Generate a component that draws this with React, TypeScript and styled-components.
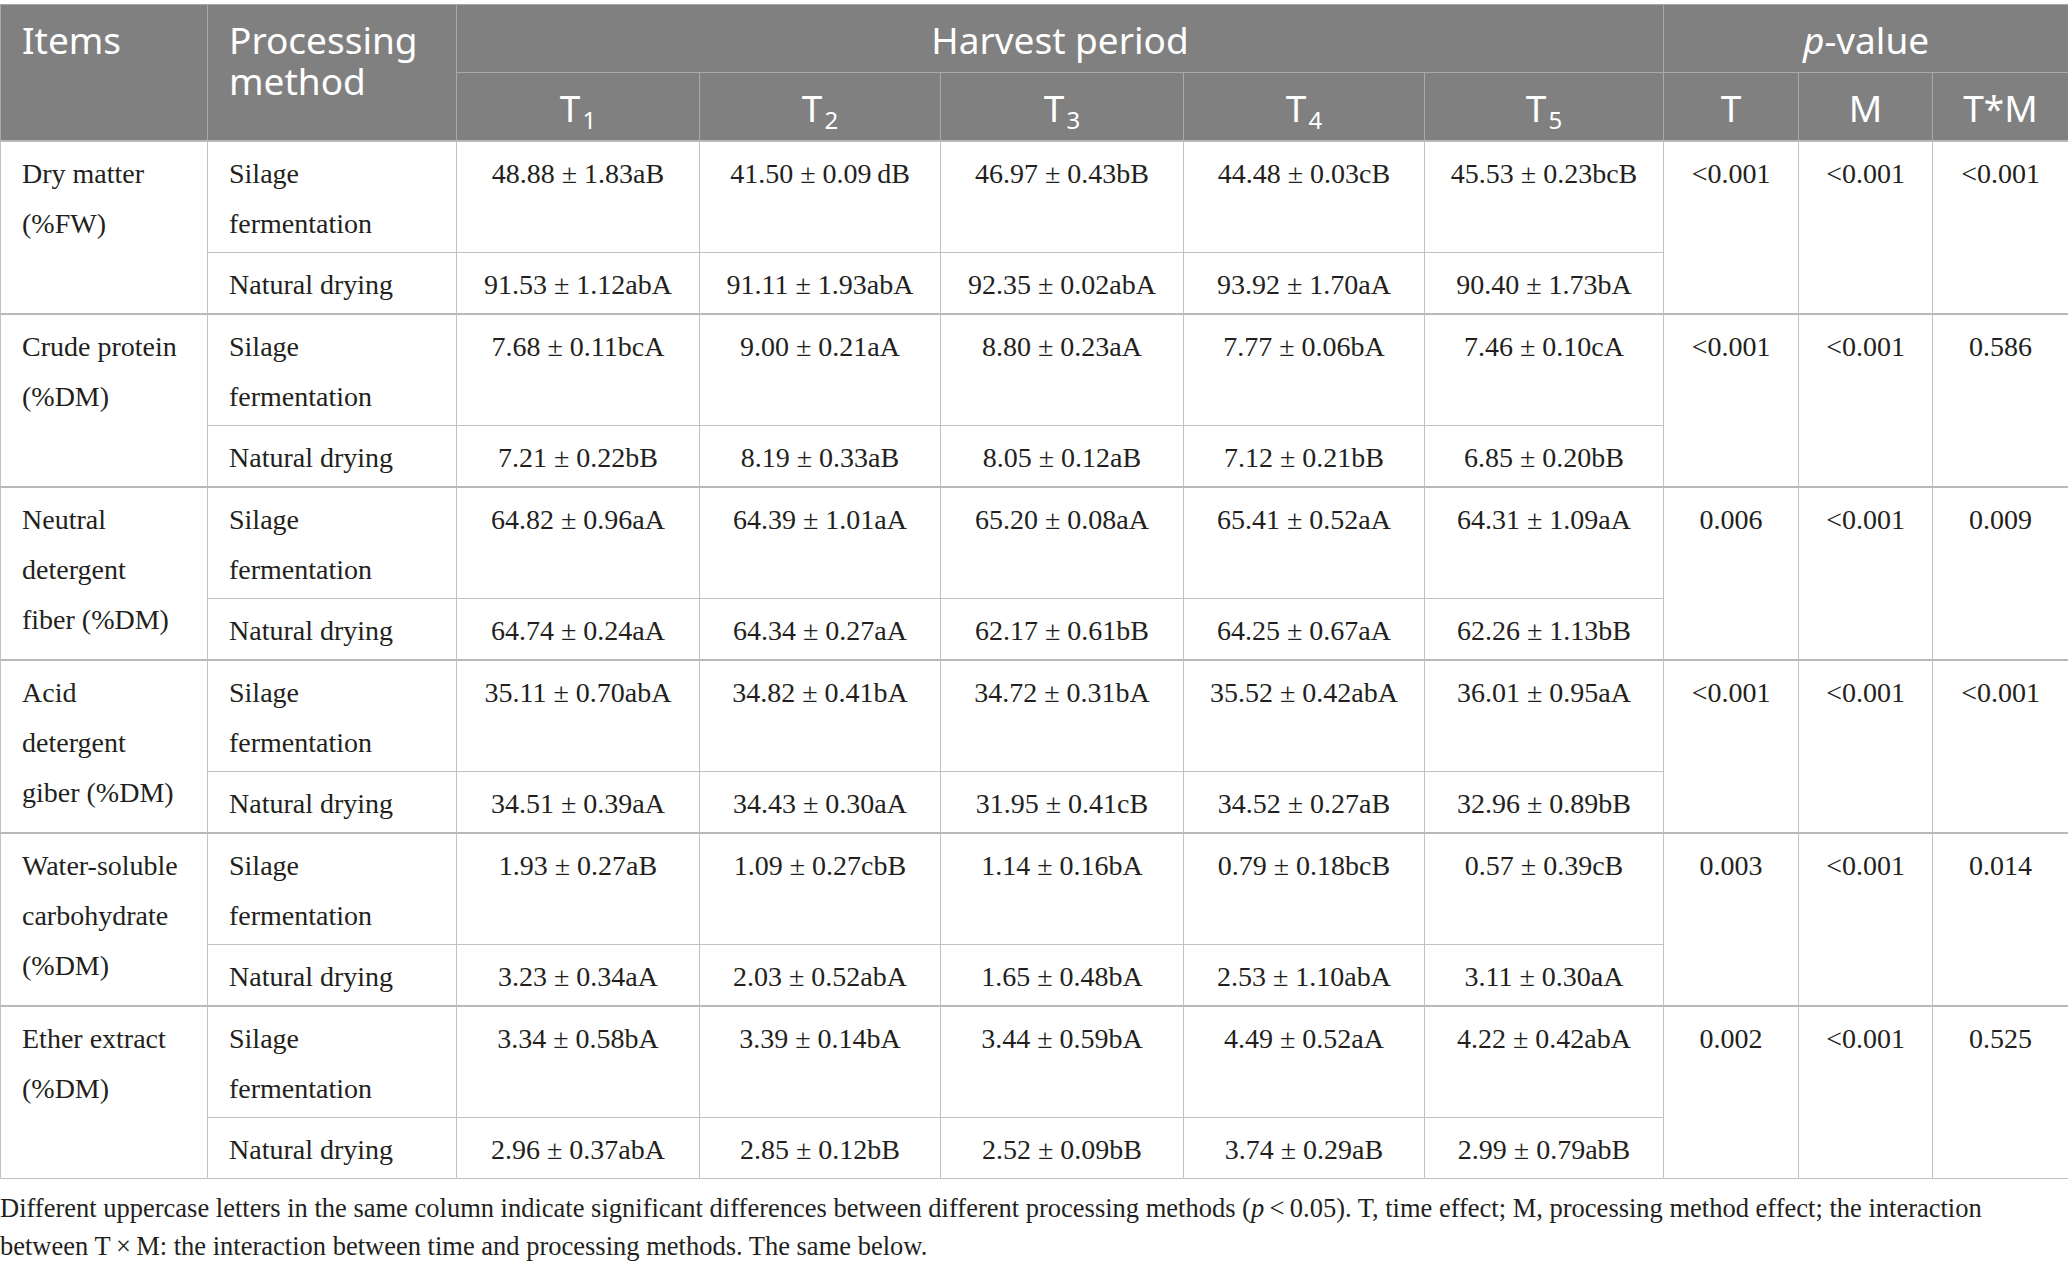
import React from "react";
import styled, { createGlobalStyle } from "styled-components";

const Global = createGlobalStyle`
  html, body { margin: 0; padding: 0; background: #ffffff; }
  body { font-family: "Liberation Serif", "Times New Roman", serif; }
`;

const Page = styled.div`
  padding-top: 4px;
  width: 2068px;
`;

const Table = styled.table`
  width: 2068px;
  table-layout: fixed;
  border-collapse: collapse;
  border: 1px solid #c2c2c2;
`;

const HeadCell = styled.th<{ $align?: "left" | "center" }>`
  background: #808080;
  color: #ffffff;
  font-family: "Noto Sans", "Open Sans", sans-serif;
  font-weight: 400;
  font-size: 37px;
  line-height: 41px;
  padding: 14px 21px 12px;
  text-align: ${(p) => p.$align ?? "center"};
  vertical-align: top;
  border: 1px solid #a9a9a9;
  white-space: nowrap;
`;

const Sub = styled.sub`
  font-size: 24px;
  line-height: 0;
  vertical-align: -7px;
  margin-left: 2px;
`;

const Cell = styled.td<{ $align?: "left" | "center"; $group?: boolean }>`
  font-family: "Liberation Serif", "Times New Roman", serif;
  font-size: 28px;
  line-height: 50px;
  color: #231f20;
  padding: 7px 21px 3px;
  text-align: ${(p) => p.$align ?? "center"};
  vertical-align: top;
  border-left: 1px solid #c2c2c2;
  border-right: 1px solid #c2c2c2;
  border-top: ${(p) => (p.$group ? "2px solid #b9b9b9" : "1px solid #c2c2c2")};
  white-space: nowrap;
`;

const Note = styled.p`
  margin: 10px 0 0;
  font-family: "Liberation Serif", "Times New Roman", serif;
  font-size: 26.5px;
  line-height: 38px;
  color: #231f20;
`;

const NoWrap = styled.span`
  white-space: nowrap;
`;

type Group = {
  item: string[];
  silage: string[];
  natural: string[];
  p: string[];
};

const groups: Group[] = [
  {
    item: ["Dry matter", "(%FW)"],
    silage: ["48.88 ± 1.83aB", "41.50 ± 0.09\u2009dB", "46.97 ± 0.43bB", "44.48 ± 0.03cB", "45.53 ± 0.23bcB"],
    natural: ["91.53 ± 1.12abA", "91.11 ± 1.93abA", "92.35 ± 0.02abA", "93.92 ± 1.70aA", "90.40 ± 1.73bA"],
    p: ["<0.001", "<0.001", "<0.001"],
  },
  {
    item: ["Crude protein", "(%DM)"],
    silage: ["7.68 ± 0.11bcA", "9.00 ± 0.21aA", "8.80 ± 0.23aA", "7.77 ± 0.06bA", "7.46 ± 0.10cA"],
    natural: ["7.21 ± 0.22bB", "8.19 ± 0.33aB", "8.05 ± 0.12aB", "7.12 ± 0.21bB", "6.85 ± 0.20bB"],
    p: ["<0.001", "<0.001", "0.586"],
  },
  {
    item: ["Neutral", "detergent", "fiber (%DM)"],
    silage: ["64.82 ± 0.96aA", "64.39 ± 1.01aA", "65.20 ± 0.08aA", "65.41 ± 0.52aA", "64.31 ± 1.09aA"],
    natural: ["64.74 ± 0.24aA", "64.34 ± 0.27aA", "62.17 ± 0.61bB", "64.25 ± 0.67aA", "62.26 ± 1.13bB"],
    p: ["0.006", "<0.001", "0.009"],
  },
  {
    item: ["Acid", "detergent", "giber (%DM)"],
    silage: ["35.11 ± 0.70abA", "34.82 ± 0.41bA", "34.72 ± 0.31bA", "35.52 ± 0.42abA", "36.01 ± 0.95aA"],
    natural: ["34.51 ± 0.39aA", "34.43 ± 0.30aA", "31.95 ± 0.41cB", "34.52 ± 0.27aB", "32.96 ± 0.89bB"],
    p: ["<0.001", "<0.001", "<0.001"],
  },
  {
    item: ["Water-soluble", "carbohydrate", "(%DM)"],
    silage: ["1.93 ± 0.27aB", "1.09 ± 0.27cbB", "1.14 ± 0.16bA", "0.79 ± 0.18bcB", "0.57 ± 0.39cB"],
    natural: ["3.23 ± 0.34aA", "2.03 ± 0.52abA", "1.65 ± 0.48bA", "2.53 ± 1.10abA", "3.11 ± 0.30aA"],
    p: ["0.003", "<0.001", "0.014"],
  },
  {
    item: ["Ether extract", "(%DM)"],
    silage: ["3.34 ± 0.58bA", "3.39 ± 0.14bA", "3.44 ± 0.59bA", "4.49 ± 0.52aA", "4.22 ± 0.42abA"],
    natural: ["2.96 ± 0.37abA", "2.85 ± 0.12bB", "2.52 ± 0.09bB", "3.74 ± 0.29aB", "2.99 ± 0.79abB"],
    p: ["0.002", "<0.001", "0.525"],
  },
];

const colWidths = [207, 249, 243, 241, 243, 241, 239, 135, 134, 136];

const Lines: React.FC<{ lines: string[] }> = ({ lines }) => (
  <>
    {lines.map((l, i) => (
      <React.Fragment key={i}>
        {i > 0 && <br />}
        {l}
      </React.Fragment>
    ))}
  </>
);

export default function App() {
  return (
    <Page>
      <Global />
      <Table>
        <colgroup>
          {colWidths.map((w, i) => (
            <col key={i} style={{ width: w }} />
          ))}
        </colgroup>
        <thead>
          <tr>
            <HeadCell rowSpan={2} $align="left">Items</HeadCell>
            <HeadCell rowSpan={2} $align="left">
              Processing
              <br />
              method
            </HeadCell>
            <HeadCell colSpan={5}>Harvest period</HeadCell>
            <HeadCell colSpan={3}>
              <i>p</i>-value
            </HeadCell>
          </tr>
          <tr>
            {[1, 2, 3, 4, 5].map((n) => (
              <HeadCell key={n}>
                T<Sub>{n}</Sub>
              </HeadCell>
            ))}
            <HeadCell>T</HeadCell>
            <HeadCell>M</HeadCell>
            <HeadCell>T*M</HeadCell>
          </tr>
        </thead>
        <tbody>
          {groups.map((g, gi) => (
            <React.Fragment key={gi}>
              <tr>
                <Cell rowSpan={2} $align="left" $group>
                  <Lines lines={g.item} />
                </Cell>
                <Cell $align="left" $group>
                  Silage
                  <br />
                  fermentation
                </Cell>
                {g.silage.map((v, i) => (
                  <Cell key={i} $group>
                    {v}
                  </Cell>
                ))}
                {g.p.map((v, i) => (
                  <Cell key={`p${i}`} rowSpan={2} $group>
                    {v}
                  </Cell>
                ))}
              </tr>
              <tr>
                <Cell $align="left">Natural drying</Cell>
                {g.natural.map((v, i) => (
                  <Cell key={i}>{v}</Cell>
                ))}
              </tr>
            </React.Fragment>
          ))}
        </tbody>
      </Table>
      <Note>
        Different uppercase letters in the same column indicate significant differences between different
        processing methods (<NoWrap><i>p</i>{"\u202F<\u202F"}0.05</NoWrap>). T, time effect; M, processing method
        effect; the interaction between <NoWrap>{"T\u202F×\u202FM"}</NoWrap>: the interaction between time and
        processing methods. The same below.
      </Note>
    </Page>
  );
}
